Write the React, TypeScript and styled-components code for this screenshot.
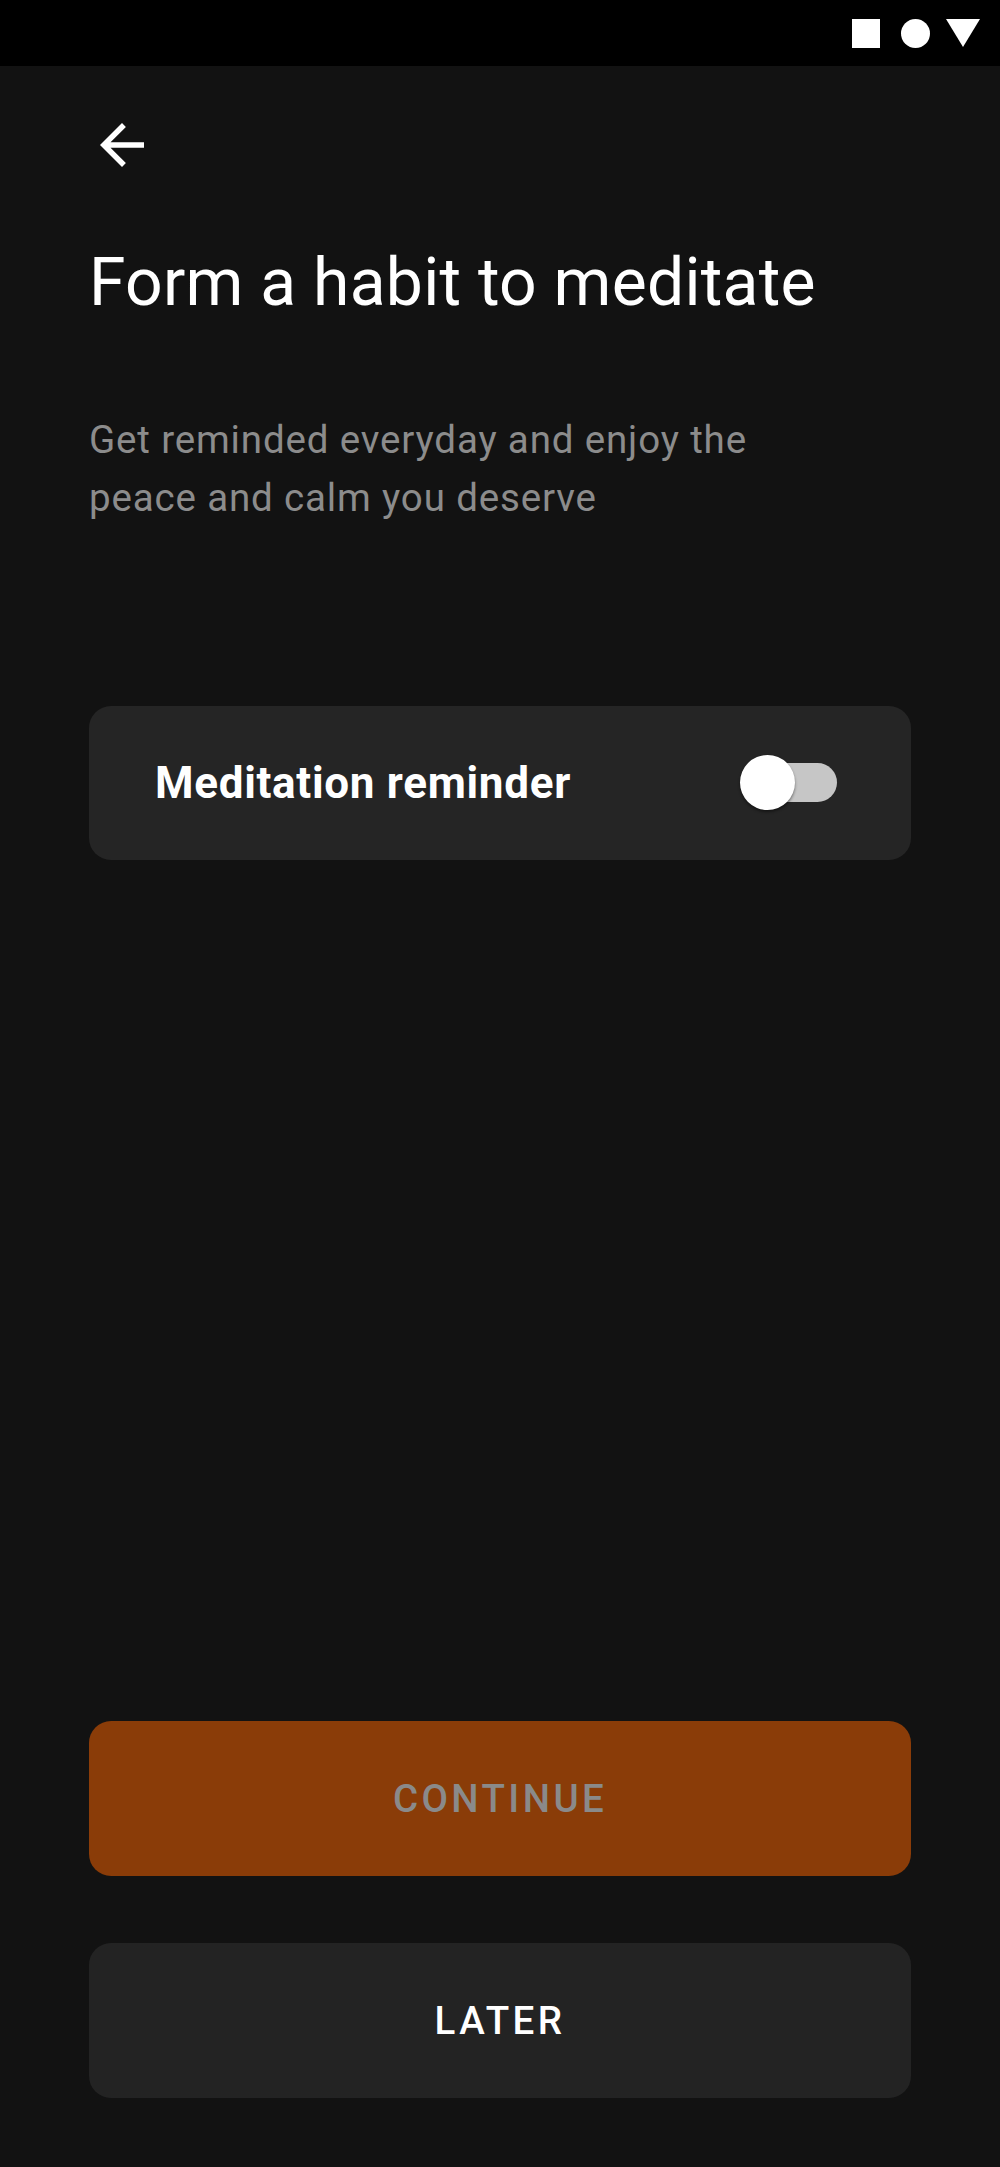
import { FC, useState } from 'react'
import styled, { createGlobalStyle } from 'styled-components'

const GlobalStyle = createGlobalStyle`
  html, body {
    margin: 0;
    padding: 0;
    background: #121212;
  }
  * {
    box-sizing: border-box;
  }
  body {
    font-family: Roboto, "Noto Sans", "Liberation Sans", sans-serif;
  }
`

const App: FC = () => {
  const [reminder, setReminder] = useState(false)

  return (
    <Screen>
      <GlobalStyle />
      <StatusBar>
        <StatusSquare />
        <StatusCircle />
        <svg width="34" height="29" viewBox="0 0 34 29">
          <polygon points="0,0 34,0 17,28" fill="#fff" />
        </svg>
      </StatusBar>

      <Main>
        <BackButton aria-label="Back">
          <svg width="66" height="66" viewBox="0 0 24 24">
            <path
              d="M20 11H7.83l5.59-5.59L12 4l-8 8 8 8 1.41-1.41L7.83 13H20v-2z"
              fill="#fff"
            />
          </svg>
        </BackButton>

        <Title>Form a habit to meditate</Title>
        <Subtitle>Get reminded everyday and enjoy the peace and calm you deserve</Subtitle>

        <ReminderCard>
          <CardLabel>Meditation reminder</CardLabel>
          <Switch $on={reminder} onClick={() => setReminder(!reminder)}>
            <Track $on={reminder} />
            <Thumb $on={reminder} />
          </Switch>
        </ReminderCard>

        <Actions>
          <ActionButton $primary>CONTINUE</ActionButton>
          <ActionButton>LATER</ActionButton>
        </Actions>
      </Main>
    </Screen>
  )
}

const Screen = styled.div`
  min-height: 100vh;
  display: flex;
  flex-direction: column;
  background: #121212;
`

const StatusBar = styled.div`
  height: 66px;
  background: #000;
  display: flex;
  align-items: center;
  justify-content: flex-end;
  gap: 21px;
  padding: 0 20px 0 0;

  svg {
    margin-left: -5px;
  }
`

const StatusSquare = styled.div`
  width: 28px;
  height: 29px;
  background: #fff;
`

const StatusCircle = styled.div`
  width: 29px;
  height: 29px;
  border-radius: 50%;
  background: #fff;
`

const Main = styled.div`
  flex: 1;
  display: flex;
  flex-direction: column;
  padding: 0 89px 69px;
`

const BackButton = styled.button`
  width: 66px;
  height: 66px;
  margin-top: 46px;
  padding: 0;
  border: none;
  background: none;
  display: flex;
  cursor: pointer;
`

const Title = styled.h1`
  margin: 66px 0 0;
  font-size: 66px;
  line-height: 77px;
  font-weight: 400;
  letter-spacing: 0.25px;
  color: #fff;
`

const Subtitle = styled.p`
  margin: 90px 0 0;
  max-width: 720px;
  font-size: 38.5px;
  line-height: 58px;
  letter-spacing: 0.85px;
  color: #8c8c8c;
`

const ReminderCard = styled.div`
  margin-top: 179px;
  height: 154px;
  border-radius: 22px;
  background: #252525;
  display: flex;
  align-items: center;
  justify-content: space-between;
  padding: 0 74px 0 66px;
`

const CardLabel = styled.span`
  font-size: 44px;
  font-weight: 700;
  letter-spacing: 0.7px;
  color: #fff;
`

const Switch = styled.div<{ $on: boolean }>`
  position: relative;
  width: 97px;
  height: 56px;
  cursor: pointer;
`

const Track = styled.div<{ $on: boolean }>`
  position: absolute;
  left: 4px;
  top: 8px;
  width: 93px;
  height: 39px;
  border-radius: 20px;
  background: ${p => (p.$on ? '#c0601f' : '#c6c6c6')};
`

const Thumb = styled.div<{ $on: boolean }>`
  position: absolute;
  top: 0;
  left: ${p => (p.$on ? '42px' : '0')};
  width: 55px;
  height: 55px;
  border-radius: 50%;
  background: ${p => (p.$on ? '#e07a30' : '#fff')};
  box-shadow: 0 2px 3px rgba(0, 0, 0, 0.45);
`

const Actions = styled.div`
  margin-top: auto;
  display: flex;
  flex-direction: column;
  gap: 67px;
`

const ActionButton = styled.button<{ $primary?: boolean }>`
  height: 155px;
  border: none;
  border-radius: 22px;
  background: ${p => (p.$primary ? '#8a3c08' : '#232323')};
  color: ${p => (p.$primary ? '#8a8a8a' : '#fff')};
  font-family: Roboto, "Liberation Sans", sans-serif;
  font-size: 38.5px;
  font-weight: 500;
  letter-spacing: 3.4px;
  cursor: pointer;
`

export default App
